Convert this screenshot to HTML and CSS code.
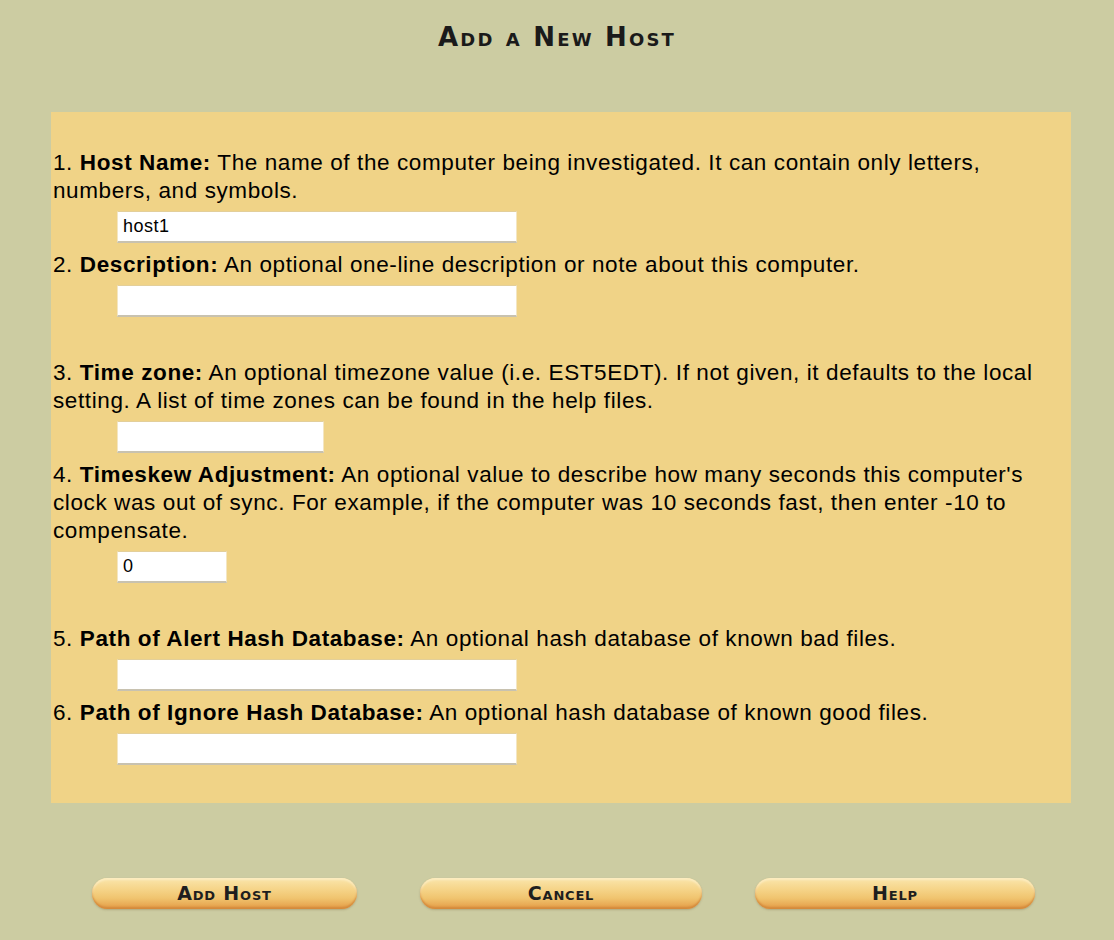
FILE: index.html
```html
<!DOCTYPE html>
<html>
<head>
<meta charset="utf-8">
<title>Add a New Host</title>
<link rel="stylesheet" href="styles.css">
</head>
<body>
<div class="header"><h1 class="title">Add a New Host</h1></div>
<form class="panel">
  <div class="item">
    <p class="desc">1. <b>Host Name:</b> The name of the computer being investigated. It can contain only letters, numbers, and symbols.</p>
    <div class="field"><input class="inp w400" type="text" value="host1"></div>
  </div>
  <div class="item spaced">
    <p class="desc">2. <b>Description:</b> An optional one-line description or note about this computer.</p>
    <div class="field"><input class="inp w400" type="text" value=""></div>
  </div>
  <div class="item">
    <p class="desc">3. <b>Time zone:</b> An optional timezone value (i.e. EST5EDT). If not given, it defaults to the local setting. A list of time zones can be found in the help files.</p>
    <div class="field"><input class="inp w207" type="text" value=""></div>
  </div>
  <div class="item spaced">
    <p class="desc">4. <b>Timeskew Adjustment:</b> An optional value to describe how many seconds this computer's clock was out of sync. For example, if the computer was 10 seconds fast, then enter -10 to compensate.</p>
    <div class="field"><input class="inp w110" type="text" value="0"></div>
  </div>
  <div class="item">
    <p class="desc">5. <b>Path of Alert Hash Database:</b> An optional hash database of known bad files.</p>
    <div class="field"><input class="inp w400" type="text" value=""></div>
  </div>
  <div class="item">
    <p class="desc">6. <b>Path of Ignore Hash Database:</b> An optional hash database of known good files.</p>
    <div class="field"><input class="inp w400" type="text" value=""></div>
  </div>
</form>
<div class="buttons">
  <button class="btn btn-add" type="button">Add Host</button>
  <button class="btn btn-cancel" type="button">Cancel</button>
  <button class="btn btn-help" type="button">Help</button>
</div>
</body>
</html>
```

FILE: styles.css
```css
html, body {
  margin: 0;
  padding: 0;
}
body {
  background: #cccca2;
  width: 1114px;
  height: 940px;
  font-family: "Liberation Sans", Arial, sans-serif;
  color: #000;
  overflow: hidden;
}
.header {
  height: 112px;
  display: flex;
  justify-content: center;
}
.title {
  margin: 22px 0 0 0;
  font-family: "DejaVu Sans", sans-serif;
  font-weight: bold;
  font-variant: small-caps;
  font-size: 26px;
  line-height: 30px;
  letter-spacing: 2.2px;
  color: #1a1a1a;
  height: 30px;
}
.panel {
  margin: 0 0 0 51px;
  width: 1020px;
  box-sizing: border-box;
  background: #f0d387;
  padding: 37px 20px 30px 2px;
}
.item {
  margin: 0;
}
.item.spaced {
  padding-bottom: 34px;
}
.desc {
  margin: 0;
  font-size: 22.5px;
  line-height: 28px;
  letter-spacing: 0.6px;
}
.desc b {
  font-weight: bold;
}
.field {
  margin: 6px 0 8px 64px;
  height: 32px;
  display: flex;
}
.inp {
  box-sizing: border-box;
  height: 32px;
  margin: 0;
  padding: 0 5px;
  background: #fff;
  border: none;
  border-top: 1px solid #e3cf9a;
  border-bottom: 2px solid #c8c2b0;
  border-left: 1px solid #f4e6c2;
  border-right: 1px solid #f4e6c2;
  font-family: "Liberation Sans", Arial, sans-serif;
  font-size: 18px;
  letter-spacing: 0.5px;
  color: #000;
  outline: none;
}
.w400 { width: 400px; }
.w207 { width: 207px; }
.w110 { width: 110px; }
.buttons {
  display: flex;
  margin-top: 75px;
  padding-left: 92px;
}
.btn {
  height: 31px;
  border: none;
  border-radius: 16px;
  background: linear-gradient(to bottom, #fae6ac 0%, #f6d58a 35%, #f0c46f 65%, #e39a45 100%);
  box-shadow: inset 0 -2px 2px #d48a3c, inset 0 2px 2px #fcecc0, 0 1px 2px rgba(120, 100, 60, 0.35);
  font-family: "DejaVu Sans", sans-serif;
  font-weight: bold;
  font-variant: small-caps;
  font-size: 19px;
  letter-spacing: 0.8px;
  line-height: 31px;
  color: #1e1e1e;
  padding: 0;
  cursor: pointer;
}
.btn-add { width: 265px; }
.btn-cancel { width: 282px; margin-left: 63px; }
.btn-help { width: 280px; margin-left: 53px; }
```
